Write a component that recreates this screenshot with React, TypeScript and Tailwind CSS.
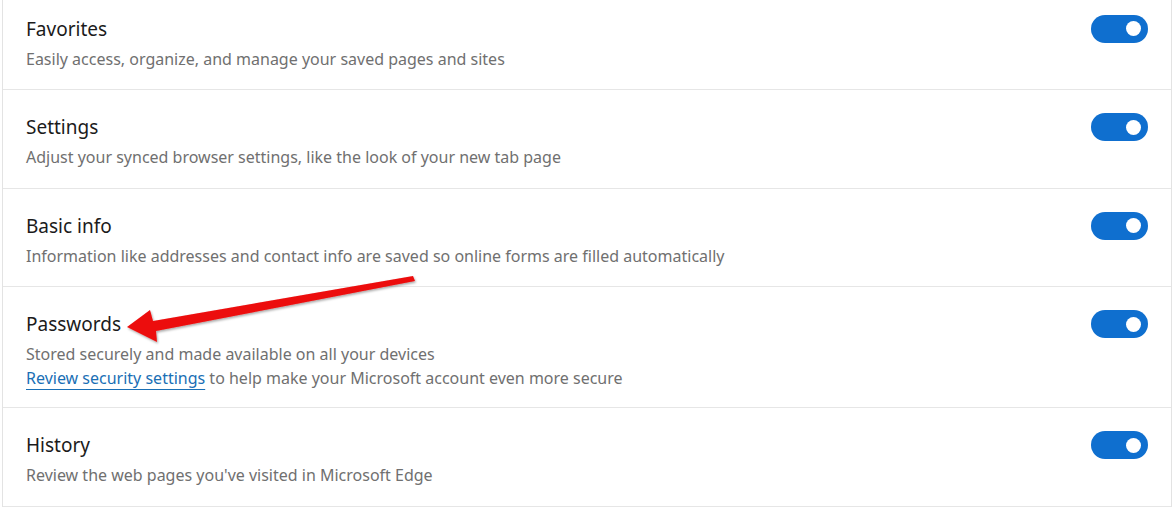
import React from 'react'

type Row = { title: string; desc: string; link?: { text: string; rest: string } }

const ROWS: Row[] = [
  { title: 'Favorites', desc: 'Easily access, organize, and manage your saved pages and sites' },
  { title: 'Settings', desc: 'Adjust your synced browser settings, like the look of your new tab page' },
  { title: 'Basic info', desc: 'Information like addresses and contact info are saved so online forms are filled automatically' },
  {
    title: 'Passwords',
    desc: 'Stored securely and made available on all your devices',
    link: { text: 'Review security settings', rest: ' to help make your Microsoft account even more secure' },
  },
  { title: 'History', desc: "Review the web pages you've visited in Microsoft Edge" },
]

function Toggle() {
  return (
    <div className="w-[57px] h-[28px] rounded-full bg-[#0f6fcf] flex items-center justify-end pr-[7px] shrink-0">
      <div className="w-[15px] h-[15px] rounded-full bg-white" />
    </div>
  )
}

export default function App() {
  return (
    <div className="relative w-[1175px] h-[509px] overflow-hidden bg-white" style={{ fontFamily: '"Noto Sans", "Open Sans", sans-serif' }}>
      <div className="ml-[2px] w-[1170px] -mt-[8.5px] border-x border-[#e3e3e3]">
        {ROWS.map((row) => (
          <div
            key={row.title}
            className={`flex items-start justify-between px-[23px] pt-[23px] border-b border-[#e6e6e6] ${row.link ? 'pb-[17px]' : 'pb-[18.5px]'}`}
          >
            <div>
              <p className="text-[19px] leading-[28px] text-[#1b1b1b]">{row.title}</p>
              <p className="mt-1 text-[16px] leading-[24px] text-[#707070]">{row.desc}</p>
              {row.link && (
                <p className="text-[16px] leading-[24px] text-[#707070]">
                  <a className="text-[#1a6fb5] underline underline-offset-[5px] decoration-[#1a6fb5]">{row.link.text}</a>
                  {row.link.rest}
                </p>
              )}
            </div>
            <Toggle />
          </div>
        ))}
      </div>
      <svg className="absolute left-0 top-0 pointer-events-none" width="1175" height="509">
        <defs>
          <filter id="sh" x="-10%" y="-50%" width="120%" height="200%">
            <feDropShadow dx="1" dy="1.5" stdDeviation="1.2" floodColor="#000" floodOpacity="0.35" />
          </filter>
        </defs>
        <polygon
          points="127,327 150,310 153,321 413,276 415,281 156,331 157,342"
          fill="#ec0a0a"
          filter="url(#sh)"
        />
      </svg>
    </div>
  )
}
